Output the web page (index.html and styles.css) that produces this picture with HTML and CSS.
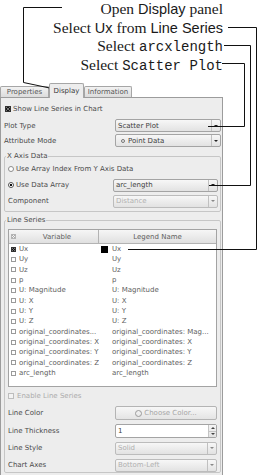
FILE: index.html
```html
<!DOCTYPE html>
<html>
<head>
<meta charset="utf-8">
<link rel="stylesheet" href="styles.css">
</head>
<body>
<div class="page">
  <div class="notes">
    <div class="note">Open <span class="sf">Display</span> panel</div>
    <div class="note">Select <span class="sf">Ux</span> from <span class="sf">Line Series</span></div>
    <div class="note">Select <span class="tt">arcxlength</span></div>
    <div class="note">Select <span class="tt">Scatter Plot</span></div>
  </div>

  <div class="tabs">
    <div class="tab w-prop">Properties</div>
    <div class="tab active w-disp">Display</div>
    <div class="tab w-info">Information</div>
  </div>

  <div class="pane">
    <div class="check-row show"><span class="cb checked"></span>Show Line Series in Chart</div>

    <div class="form-row top-row first">
      <span class="lbl">Plot Type</span>
      <div class="combo"><span class="val">Scatter Plot</span><span class="arrow"></span></div>
    </div>
    <div class="form-row top-row">
      <span class="lbl">Attribute Mode</span>
      <div class="combo"><span class="val"><span class="pt-icon"></span>Point Data</span><span class="arrow"></span></div>
    </div>

    <fieldset class="grp grp-x">
      <legend>X Axis Data</legend>
      <div class="radio-row"><span class="rb"></span>Use Array Index From Y Axis Data</div>
      <div class="form-row grp-row">
        <span class="lbl"><span class="rb on"></span>Use Data Array</span>
        <div class="combo"><span class="val">arc_length</span><span class="arrow"></span></div>
      </div>
      <div class="form-row grp-row">
        <span class="lbl">Component</span>
        <div class="combo disabled"><span class="val">Distance</span><span class="arrow"></span></div>
      </div>
    </fieldset>

    <fieldset class="grp grp-ls">
      <legend>Line Series</legend>
      <div class="tbl">
        <div class="thead">
          <div class="th th-var"><span class="cb hx"></span><span class="th-label">Variable</span></div>
          <div class="th th-leg">Legend Name</div>
        </div>
        <div class="tr"><div class="td"><span class="cb sm checked"></span>Ux</div><div class="td leg"><span class="sw black"></span>Ux</div></div>
        <div class="tr"><div class="td"><span class="cb sm"></span>Uy</div><div class="td leg"><span class="sw"></span>Uy</div></div>
        <div class="tr"><div class="td"><span class="cb sm"></span>Uz</div><div class="td leg"><span class="sw"></span>Uz</div></div>
        <div class="tr"><div class="td"><span class="cb sm"></span>p</div><div class="td leg"><span class="sw"></span>p</div></div>
        <div class="tr"><div class="td"><span class="cb sm"></span>U: Magnitude</div><div class="td leg"><span class="sw"></span>U: Magnitude</div></div>
        <div class="tr"><div class="td"><span class="cb sm"></span>U: X</div><div class="td leg"><span class="sw"></span>U: X</div></div>
        <div class="tr"><div class="td"><span class="cb sm"></span>U: Y</div><div class="td leg"><span class="sw"></span>U: Y</div></div>
        <div class="tr"><div class="td"><span class="cb sm"></span>U: Z</div><div class="td leg"><span class="sw"></span>U: Z</div></div>
        <div class="tr"><div class="td"><span class="cb sm"></span>original_coordinates...</div><div class="td leg"><span class="sw"></span>original_coordinates: Mag...</div></div>
        <div class="tr"><div class="td"><span class="cb sm"></span>original_coordinates: X</div><div class="td leg"><span class="sw"></span>original_coordinates: X</div></div>
        <div class="tr"><div class="td"><span class="cb sm"></span>original_coordinates: Y</div><div class="td leg"><span class="sw"></span>original_coordinates: Y</div></div>
        <div class="tr"><div class="td"><span class="cb sm"></span>original_coordinates: Z</div><div class="td leg"><span class="sw"></span>original_coordinates: Z</div></div>
        <div class="tr"><div class="td"><span class="cb sm"></span>arc_length</div><div class="td leg"><span class="sw"></span>arc_length</div></div>
      </div>

      <div class="check-row enable disabled-text"><span class="cb dis"></span>Enable Line Series</div>

      <div class="form-row ls-row lc">
        <span class="lbl">Line Color</span>
        <div class="btn"><span class="circ"></span>Choose Color...</div>
      </div>
      <div class="form-row ls-row">
        <span class="lbl">Line Thickness</span>
        <div class="spin"><span class="val">1</span><span class="spin-btns"><span class="up"></span><span class="down"></span></span></div>
      </div>
      <div class="form-row ls-row">
        <span class="lbl">Line Style</span>
        <div class="combo disabled"><span class="val">Solid</span><span class="arrow"></span></div>
      </div>
      <div class="form-row ls-row">
        <span class="lbl">Chart Axes</span>
        <div class="combo disabled"><span class="val">Bottom-Left</span><span class="arrow"></span></div>
      </div>
    </fieldset>
  </div>

  <svg class="callouts" width="263" height="475" viewBox="0 0 263 475">
    <g fill="none" stroke="#111" stroke-width="1">
      <path d="M62 7.5 H23.5 V82.5 L52 88.5"/>
      <path d="M228 27.5 H256.5 V249.5 H128"/>
      <path d="M224 45.5 H250.5 V185.5 H209"/>
      <path d="M222 63.5 H244.5 V126.5 H208"/>
    </g>
  </svg>
</div>
</body>
</html>
```

FILE: styles.css
```css
* { box-sizing: border-box; }
html, body { margin: 0; padding: 0; background: #fff; }
body {
  width: 263px;
  height: 475px;
  overflow: hidden;
  font-family: "DejaVu Sans", sans-serif;
  font-size: 7px;
  color: #4a4a4a;
}
.page { position: relative; width: 263px; height: 475px; }

/* annotations */
.notes {
  height: 83px;
  padding-right: 40px;
  text-align: right;
  font-family: "Liberation Serif", serif;
  font-size: 15.5px;
  color: #1a1a1a;
}
.note { height: 18.5px; line-height: 18px; white-space: nowrap; }
.sf { font-family: "Liberation Sans", sans-serif; font-size: 14.5px; }
.tt { font-family: "Liberation Mono", monospace; font-size: 14px; }

.callouts { position: absolute; left: 0; top: 0; pointer-events: none; }

/* tabs */
.tabs { display: flex; align-items: flex-end; height: 14px; width: 223px; }
.tab {
  height: 11px;
  border: 1px solid #a6a6a6;
  border-bottom: none;
  border-radius: 2px 2px 0 0;
  background: linear-gradient(#f2f2f2, #dcdcdc);
  text-align: center;
  line-height: 10px;
  color: #555;
  white-space: nowrap;
}
.w-prop { width: 49px; }
.w-disp { width: 35px; }
.w-info { width: 48px; }
.tab.active {
  height: 15px;
  line-height: 14px;
  background: #ededed;
  margin-bottom: -1px;
  position: relative;
  z-index: 1;
  color: #3a3a3a;
}

/* pane */
.pane {
  width: 223px;
  border: 1px solid #9c9c9c;
  border-bottom: none;
  background: #ededed;
  padding: 4px 1px 0 3px;
  display: flex;
  flex-direction: column;
  height: 378px;
}

.check-row { display: flex; align-items: center; white-space: nowrap; }
.check-row.show { height: 14px; }
.check-row.show .cb { margin-left: 1px; margin-right: 2px; }
.check-row.enable { height: 12px; margin-top: 3px; }
.check-row.enable .cb { margin-right: 3px; }
.disabled-text { color: #ababab; }

.cb {
  display: inline-block;
  width: 6px;
  height: 6px;
  border: 1px solid #8a8a8a;
  background: #fff;
  flex: none;
}
.cb.sm { width: 5px; height: 5px; margin-right: 3px; border-color: #9a9a9a; }
.cb.checked {
  border-color: #333;
  background:
    linear-gradient(45deg, transparent 40%, #777 40%, #777 60%, transparent 60%),
    linear-gradient(-45deg, transparent 40%, #777 40%, #777 60%, transparent 60%),
    #161616;
}
.cb.dis { border-color: #bdbdbd; background: #f3f3f3; }
.cb.hx {
  width: 5px; height: 5px;
  border-color: #b5b5b5;
  background:
    linear-gradient(45deg, transparent 42%, #aaa 42%, #aaa 58%, transparent 58%),
    linear-gradient(-45deg, transparent 42%, #aaa 42%, #aaa 58%, transparent 58%),
    #f4f4f4;
}

.rb {
  display: inline-block;
  width: 6px;
  height: 6px;
  border: 1px solid #8c8c8c;
  border-radius: 50%;
  background: #fff;
  margin-right: 2px;
  flex: none;
}
.rb.on { background: radial-gradient(circle, #111 0 45%, #fff 55%); border-color: #555; }

.radio-row { display: flex; align-items: center; height: 14px; white-space: nowrap; }

.form-row { display: grid; align-items: center; }
.form-row .lbl { display: flex; align-items: center; white-space: nowrap; }
.top-row { grid-template-columns: 111px 106px; height: 15px; }
.top-row.first { margin-top: 2px; }
.grp-row { grid-template-columns: 105px 105px; height: 14px; margin-top: 2px; }
.ls-row { grid-template-columns: 107px 102px; height: 14px; margin-top: 3px; }
.ls-row.lc { margin-top: 4px; }
.ls-row + .ls-row { margin-top: 3px; }
.ls-row.lc + .ls-row { margin-top: 4px; }

/* combo box */
.combo {
  display: flex;
  height: 13px;
  border: 1px solid #a4a4a4;
  border-radius: 2px;
  background: linear-gradient(#f7f7f7, #e2e2e2);
  color: #3e3e3e;
}
.combo .val { flex: 1; display: flex; align-items: center; padding-left: 2px; white-space: nowrap; }
.combo .arrow {
  width: 9px;
  border-left: 1px solid #c0c0c0;
  display: flex;
  align-items: center;
  justify-content: center;
}
.combo .arrow::after {
  content: "";
  width: 0; height: 0;
  border-left: 2px solid transparent;
  border-right: 2px solid transparent;
  border-top: 2px solid #222;
}
.combo.disabled { color: #b0b0b0; border-color: #bcbcbc; }
.combo.disabled .arrow::after { border-top-color: #888; }
.pt-icon {
  display: inline-block;
  width: 4px; height: 4px;
  border: 1px solid #777;
  border-radius: 50%;
  margin-left: 3px;
  margin-right: 3px;
}

/* group boxes */
.grp {
  margin: 0;
  min-width: 0;
  border: 1px solid #c6c6c6;
  border-radius: 2px;
}
.grp legend {
  padding: 0 1px;
  margin-left: -2px;
  line-height: 10px;
  color: #4a4a4a;
}
.grp-x { margin-top: 3px; padding: 1px 2px 3px 3px; }
.grp-ls { margin-top: 3px; padding: 4px 2px 0 3px; }

/* table */
.tbl {
  width: 209px;
  height: 158px;
  border: 1px solid #a3a3a3;
  background: #fff;
  color: #606060;
}
.thead { display: grid; grid-template-columns: 90px 1fr; height: 14px; }
.th {
  background: linear-gradient(#f6f6f6, #e0e0e0);
  border-bottom: 1px solid #b3b3b3;
  display: flex;
  align-items: center;
}
.th-var { border-right: 1px solid #b3b3b3; padding-left: 2px; }
.th-label { flex: 1; text-align: center; }
.th-leg { justify-content: center; }
.tr { display: grid; grid-template-columns: 90px 1fr; height: 10.33px; }
.td { display: flex; align-items: center; padding-left: 2px; white-space: nowrap; overflow: hidden; }
.td.leg { padding-left: 2px; }
.sw { display: inline-block; width: 7px; height: 7px; margin-right: 4px; flex: none; }
.sw.black { background: #000; }

/* button */
.btn {
  height: 14px;
  border: 1px solid #b4b4b4;
  border-radius: 2px;
  background: linear-gradient(#f7f7f7, #e4e4e4);
  display: flex;
  align-items: center;
  justify-content: center;
  color: #a6a6a6;
  white-space: nowrap;
}
.circ {
  display: inline-block;
  width: 7px; height: 7px;
  border: 1px solid #9a9a9a;
  border-radius: 50%;
  margin-right: 2px;
}

/* spin box */
.spin {
  height: 14px;
  border: 1px solid #a4a4a4;
  border-radius: 2px;
  background: #fff;
  display: flex;
  color: #3e3e3e;
}
.spin .val { flex: 1; display: flex; align-items: center; padding-left: 2px; }
.spin-btns {
  width: 8px;
  display: flex;
  flex-direction: column;
  border-left: 1px solid #c4c4c4;
  background: linear-gradient(#f5f5f5, #e3e3e3);
}
.spin-btns span { flex: 1; display: flex; align-items: center; justify-content: center; }
.spin-btns .up { border-bottom: 1px solid #c4c4c4; }
.spin-btns .up::after {
  content: ""; width: 0; height: 0;
  border-left: 2px solid transparent; border-right: 2px solid transparent;
  border-bottom: 2px solid #444;
}
.spin-btns .down::after {
  content: ""; width: 0; height: 0;
  border-left: 2px solid transparent; border-right: 2px solid transparent;
  border-top: 2px solid #444;
}
```
